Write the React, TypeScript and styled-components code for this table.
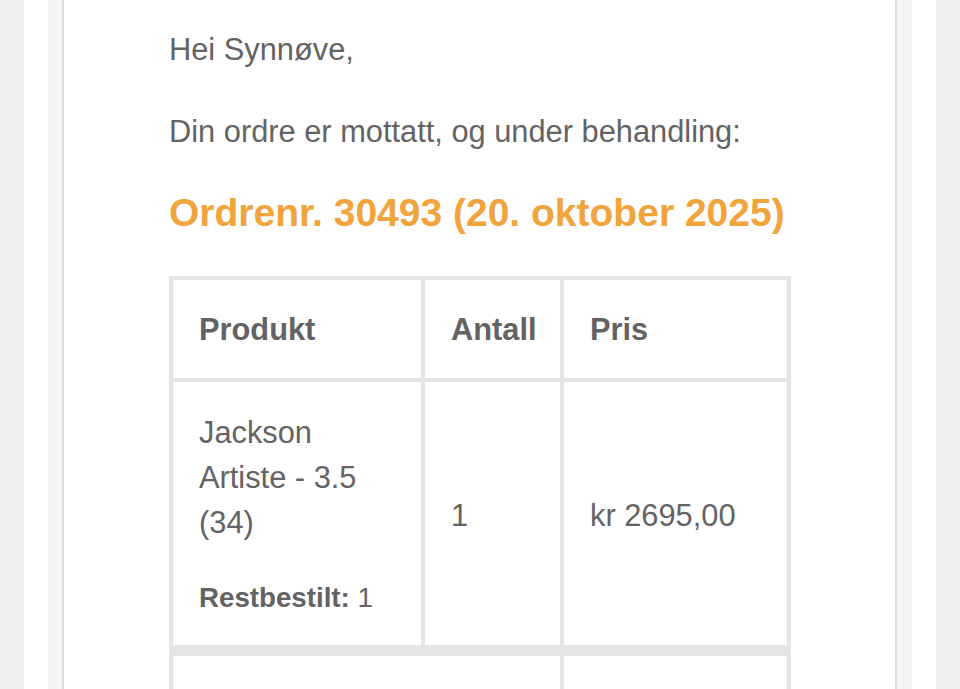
import React from "react";
import styled, { createGlobalStyle } from "styled-components";

const GlobalStyle = createGlobalStyle`
  *, *::before, *::after { box-sizing: border-box; }
  html, body { margin: 0; padding: 0; }
  body {
    background: #efefef;
    font-family: "Liberation Sans", Arial, Helvetica, sans-serif;
    height: 689px;
    overflow: hidden;
  }
`;

const OuterBand = styled.div`
  padding: 0 24px;
  background: #efefef;
  min-height: 689px;
  display: flex;
`;

const WhiteBand = styled.div`
  flex: 1;
  display: flex;
  padding: 0 24px;
  background: #ffffff;
`;

const Frame = styled.div`
  flex: 1;
  display: flex;
  padding: 0 15px 0 14px;
  background: #f5f5f5;
`;

const Container = styled.div`
  flex: 1;
  background: #ffffff;
  border-left: 2px solid #dedede;
  border-right: 2px solid #dedede;
`;

const Content = styled.div`
  padding: 27px 104px 0 105px;
  color: #636363;
  font-size: 30.8px;
  line-height: 45px;
`;

const Paragraph = styled.p<{ $gap: number }>`
  margin: 0 0 ${(p) => p.$gap}px;
`;

const Heading = styled.h2`
  margin: 0 0 38px;
  color: #f1a33c;
  font-size: 39px;
  line-height: 50px;
  font-weight: 700;
`;

const OrderTable = styled.table`
  width: 622px;
  table-layout: fixed;
  border-collapse: separate;
  border-spacing: 0;
  border: 2px solid #e5e5e5;
  color: #636363;
  font-size: 30.8px;
  line-height: 45px;
`;

const HeadCell = styled.th<{ $width?: number }>`
  ${(p) => (p.$width ? `width: ${p.$width}px;` : "")}
  border: 2px solid #e5e5e5;
  padding: 27px 26px 26px;
  text-align: left;
  vertical-align: middle;
  font-weight: 700;
`;

const Cell = styled.td`
  border: 2px solid #e5e5e5;
  padding: 28px 26px 25px;
  text-align: left;
  vertical-align: middle;
`;

const FootHead = styled.th`
  border: 2px solid #e5e5e5;
  border-top-width: 9px;
  padding: 26.5px 26px;
  height: 100px;
  text-align: left;
  font-weight: 700;
`;

const FootCell = styled.td`
  border: 2px solid #e5e5e5;
  border-top-width: 9px;
  padding: 26.5px 26px;
  height: 100px;
  text-align: left;
`;

const MetaList = styled.ul`
  list-style: none;
  margin: 30px 0 0;
  padding: 0;
  font-size: 27.7px;
`;

const MetaLabel = styled.strong`
  font-weight: 700;
`;

export default function App() {
  return (
    <>
      <GlobalStyle />
      <OuterBand>
        <WhiteBand>
          <Frame>
            <Container>
              <Content>
                <Paragraph $gap={37}>Hei Synnøve,</Paragraph>
                <Paragraph $gap={34}>Din ordre er mottatt, og under behandling:</Paragraph>
                <Heading>Ordrenr. 30493 (20. oktober 2025)</Heading>
                <OrderTable>
                  <thead>
                    <tr>
                      <HeadCell $width={252}>Produkt</HeadCell>
                      <HeadCell $width={139}>Antall</HeadCell>
                      <HeadCell $width={227}>Pris</HeadCell>
                    </tr>
                  </thead>
                  <tbody>
                    <tr>
                      <Cell>
                        Jackson Artiste - 3.5 (34)
                        <MetaList>
                          <li>
                            <MetaLabel>Restbestilt:</MetaLabel> 1
                          </li>
                        </MetaList>
                      </Cell>
                      <Cell>1</Cell>
                      <Cell>kr 2695,00</Cell>
                    </tr>
                  </tbody>
                  <tfoot>
                    <tr>
                      <FootHead colSpan={2} />
                      <FootCell />
                    </tr>
                  </tfoot>
                </OrderTable>
              </Content>
            </Container>
          </Frame>
        </WhiteBand>
      </OuterBand>
    </>
  );
}
